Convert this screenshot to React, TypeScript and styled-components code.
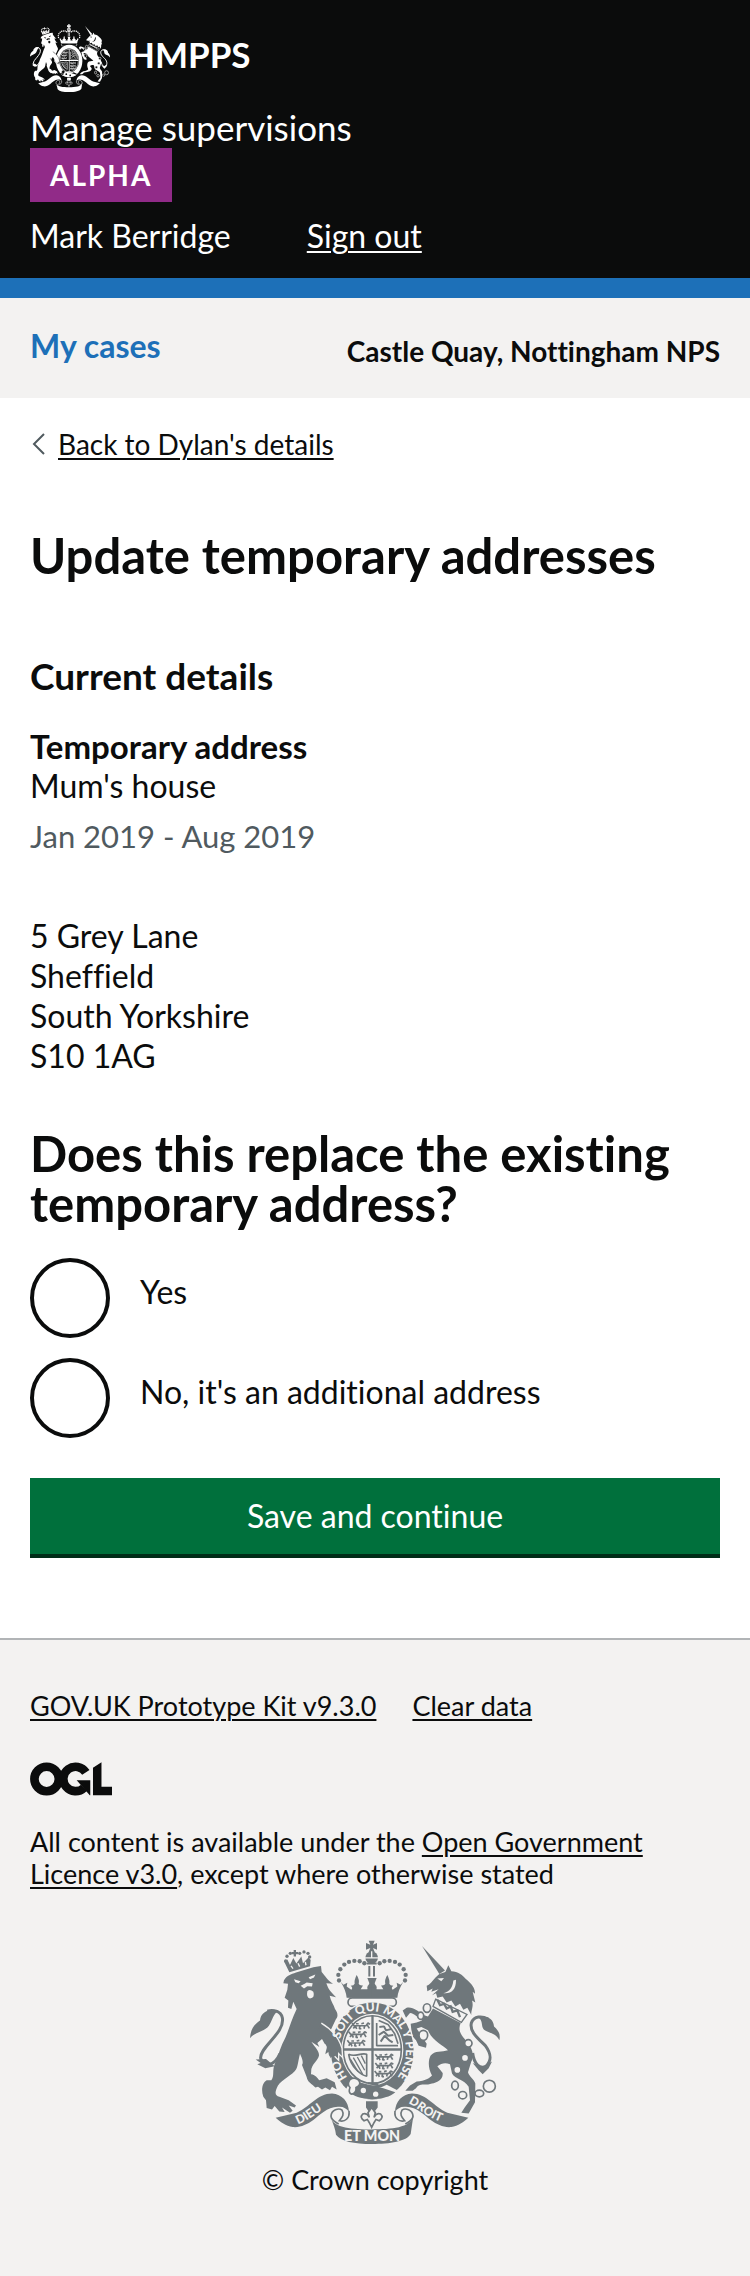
import React, { useState } from 'react';
import styled, { createGlobalStyle } from 'styled-components';

const colour = {
  ink: '#0b0c0c',
  blue: '#1d70b8',
  grey: '#f3f2f1',
  midGrey: '#b1b4b6',
  secondary: '#505a5f',
  crest: '#6f777b',
  purple: '#912b88',
  green: '#00703c',
  greenShadow: '#002d18',
};

const GlobalStyle = createGlobalStyle`
  *, *::before, *::after { box-sizing: border-box; }
  body {
    margin: 0;
    background: #fff;
    color: ${colour.ink};
    font-family: Lato, "Liberation Sans", sans-serif;
    font-size: 32px;
    line-height: 40px;
    font-variant-ligatures: none;
  }
`;

const Link = styled.a`
  color: inherit;
  text-decoration: underline;
  text-decoration-thickness: 2px;
  text-underline-offset: 3px;
`;

const Header = styled.header`
  padding: 24px 30px 22px;
  background: ${colour.ink};
  border-bottom: 20px solid ${colour.blue};
  color: #fff;
`;

const Brand = styled.a`
  display: flex;
  gap: 18px;
  color: inherit;
  text-decoration: none;
  font-size: 35px;
  font-weight: 700;
  line-height: 60px;
`;

const Service = styled.div`
  margin-top: 14px;
  font-size: 35px;
  line-height: 42px;
`;

const Tag = styled.strong`
  display: inline-block;
  vertical-align: top;
  padding: 12px 20px;
  background: ${colour.purple};
  font-size: 28px;
  line-height: 30px;
  letter-spacing: 2px;
`;

const UserRow = styled.div`
  display: flex;
  gap: 76px;
  margin-top: 14px;
`;

const Nav = styled.nav`
  display: flex;
  justify-content: space-between;
  align-items: flex-start;
  padding: 28px 30px 22px;
  background: ${colour.grey};
  font-weight: 700;
`;

const NavLink = styled.a`
  color: ${colour.blue};
  text-decoration: none;
`;

const Team = styled.span`
  font-size: 28px;
  line-height: 50px;
`;

const Main = styled.main`
  padding: 30px 30px 80px;
`;

const Back = styled.div`
  display: flex;
  align-items: center;
  gap: 12px;
  padding-left: 2px;
  font-size: 28px;
  line-height: 32px;
`;

const PageTitle = styled.h1`
  margin: 70px 0 76px;
  font-size: 49px;
  line-height: 50px;
`;

const SectionTitle = styled.h2`
  margin: 0 0 30px;
  font-size: 37px;
  line-height: 40px;
`;

const DetailName = styled.h3`
  margin: 0;
  font-size: 33px;
  line-height: 40px;
`;

const Para = styled.p`
  margin: 0;
`;

const Dates = styled.p`
  margin: 10px 0 60px;
  color: ${colour.secondary};
  font-size: 31px;
`;

const Address = styled.address`
  font-style: normal;
`;

const Question = styled.fieldset`
  display: flex;
  flex-direction: column;
  gap: 20px;
  min-width: 0;
  margin: 52px 0 40px;
  padding: 0;
  border: 0;
`;

const Legend = styled.legend`
  margin-bottom: 30px;
  padding: 0;
  font-size: 49px;
  font-weight: 700;
  line-height: 50px;
`;

const Option = styled.div`
  display: flex;
  gap: 30px;
`;

const Radio = styled.input`
  appearance: none;
  flex: none;
  width: 80px;
  height: 80px;
  margin: 0;
  border: 4px solid ${colour.ink};
  border-radius: 50%;
  background: #fff;
  &:checked {
    background: radial-gradient(circle, ${colour.ink} 20px, #fff 21px);
  }
`;

const OptionLabel = styled.label`
  padding-top: 14px;
`;

const Submit = styled.button`
  display: block;
  width: 100%;
  padding: 18px 20px;
  border: 0;
  border-bottom: 4px solid ${colour.greenShadow};
  background: ${colour.green};
  color: #fff;
  font: inherit;
  cursor: pointer;
`;

const Footer = styled.footer`
  padding: 50px 30px 80px;
  border-top: 2px solid ${colour.midGrey};
  background: ${colour.grey};
  font-size: 27px;
  line-height: 32px;
`;

const FooterLinks = styled.div`
  display: flex;
  gap: 36px;
`;

const Ogl = styled.svg`
  display: block;
  width: 82px;
  height: 34px;
  margin: 40px 0 30px;
`;

const Copyright = styled.a`
  display: flex;
  flex-direction: column;
  align-items: center;
  gap: 20px;
  margin-top: 50px;
  color: inherit;
  text-decoration: none;
`;

const CrestSvg = styled.svg<{ $w: number; $h: number }>`
  display: block;
  flex: none;
  width: ${(p) => p.$w}px;
  height: ${(p) => p.$h}px;
`;

const dots = [
  [327, 180], [325, 163], [331, 146], [343, 132], [357, 124], [373, 121], [389, 122], [403, 128],
];

const Mirror = ({ children }: { children: React.ReactNode }) => (
  <g transform="translate(852 0) scale(-1 1)">{children}</g>
);

const HalfCrown = () => (
  <g>
    {dots.map(([x, y]) => <circle key={y + x} cx={x} cy={y} r="6.5" />)}
    <path d="M332 184 L340 193 L352 187 L350 198 L364 208 Q370 202 362 196 Q372 196 374 190 Q372 178 380 163 Q389 177 386 190 Q388 196 399 195 L392 206 L412 206 L413 196 L427 190 V234 L350 232 Q348 210 332 184Z" />
    <path d="M412 172 H427 V202 H412 L418 188Z" />
  </g>
);

const Ribbon = ({ bg, fg }: { bg: string; fg: string }) => (
  <g>
    <path d="M137 593 L200 578 C240 560 262 520 306 520 C336 522 356 544 357 576 C350 564 338 558 324 560 C290 562 270 584 250 600 C230 614 212 623 188 621 C168 617 150 606 137 593Z" />
    <path d="M357 572 C360 596 344 606 328 602 C336 592 344 584 336 570 C326 562 304 570 303 588 C304 602 318 606 326 612" fill={bg} stroke={fg} strokeWidth="5" />
  </g>
);

/* Positions of the passant lions in the first and fourth quarters of the shield. */
const lions = [[366, 304], [356, 330], [352, 356], [436, 398], [436, 424], [434, 448]];

/* Royal coat of arms. bg is the surface it stands on, used for the cut-out detail. */
function Crest({ w, h, fg, bg, motto }: { w: number; h: number; fg: string; bg: string; motto?: boolean }) {
  return (
    <CrestSvg $w={w} $h={h} viewBox="60 58 750 614" preserveAspectRatio="none" fill={fg} aria-hidden="true">
      {/* cross and orb */}
      <path d="M416 60 H434 L429 72 L441 67 V87 L429 82 L434 94 H416 L421 82 L408 87 V67 L421 72Z" />
      <circle cx="425" cy="111" r="19" />
      <path d="M405 112 H445 M425 92 V112" stroke={bg} strokeWidth="4" />
      <path d="M415 136 H421 V168 H415Z M429 136 H435 V168 H429Z M410 126 H440 V132 H410Z" />
      <HalfCrown />
      <Mirror><HalfCrown /></Mirror>
      <rect x="354" y="232" width="145" height="26" rx="13" fill={bg} stroke={fg} strokeWidth="5" />

      {/* lion */}
      <path d="M178 155 L162 122 L172 117 L180 133 L190 112 L199 129 L214 108 L219 128 L236 110 L242 118 L240 137 L178 155Z" />
      <circle cx="167" cy="121" r="5" /><circle cx="171" cy="107" r="5" /><circle cx="181" cy="98" r="5" />
      <circle cx="209" cy="98" r="5" /><circle cx="222" cy="94" r="5" /><circle cx="234" cy="98" r="5" /><circle cx="239" cy="109" r="5" />
      <path d="M191 88 H198 V94 H204 V101 H198 V108 H191 V101 H185 V94 H191Z" />
      <path d="M183 136 L189 144 M204 128 L209 138 M226 124 L228 134" stroke={bg} strokeWidth="4" />
      <path d="M162 179 C172 164 182 162 198 156 L250 140 L273 136 L275 154 C286 166 290 176 309 190 L289 188 C295 206 302 214 318 230 L299 226 C302 242 312 254 315 266 C322 276 326 286 318 296 L302 330 L334 380 L335 410 L322 398 L325 416 L308 404 L306 416 C300 410 294 404 296 394 L286 402 C288 386 296 378 284 370 L276 356 L262 368 L268 380 L244 364 C256 382 268 392 267 406 C264 420 250 428 244 446 L243 462 C258 464 262 474 268 480 L290 474 L314 486 L320 508 L306 500 L300 510 L286 502 L276 508 L264 500 L256 502 C246 490 232 486 230 470 L216 434 C222 424 214 410 210 400 C204 424 204 436 198 448 C188 464 156 478 144 496 C132 520 136 526 148 530 L176 540 L198 556 L194 562 L176 556 L188 572 L180 578 L156 562 L164 576 L148 574 L134 558 L126 568 L110 564 L108 540 L100 530 C92 508 98 486 110 480 L124 480 C134 468 126 450 134 432 C146 404 152 376 166 352 C178 326 184 298 200 266 L190 244 L184 266 L174 262 L175 240 L164 232 L172 208 L174 190 L160 188Z" />
      <path d="M192 176 L212 182 L206 188 L196 185Z M236 170 L256 162 L252 171 L240 176Z M212 196 L224 190 L230 186 L248 188 L246 198 L232 197 L222 204Z M232 212 Q240 204 250 214 Q256 232 240 234 Q228 232 232 212Z" fill={bg} />
      <path d="M150 400 C134 436 102 446 92 414 C88 380 166 338 157 292 C152 270 128 268 112 272" fill="none" stroke={fg} strokeWidth="9" />
      <path d="M146 270 C116 262 92 276 90 300 C80 308 62 318 60 354 C76 332 110 334 120 310 C128 298 128 282 146 270Z M77 418 L108 416 L134 438 L106 444 L82 432 L92 428Z" />

      {/* unicorn */}
      <path d="M576 76 L645 150 L628 160Z" />
      <path d="M628 160 L646 154 L655 134 L664 152 C684 152 698 164 706 174 C726 190 736 204 735 220 L728 214 L736 246 L726 240 C732 260 722 270 724 284 L712 262 L700 268 L690 250 L676 258 L664 240 L650 246 L638 228 L622 232 L618 218 L606 224 L626 206 L604 214 L608 204 L592 212 L590 196 C606 188 608 176 628 160Z" />
      <path d="M622 174 L642 172 L634 182Z M678 178 C678 210 664 220 640 218 C660 214 668 200 670 180Z" fill={bg} />
      <path d="M617 236 L711 282 L694 306 L609 258Z" fill={bg} stroke={fg} strokeWidth="4" />
      <path d="M622 238 L630 254 L642 250 L650 264 L662 258 L668 274 L682 270 L690 290" fill="none" stroke={fg} strokeWidth="7" />
      <path d="M609 264 L692 308 C684 326 690 340 704 356 C722 376 736 400 724 424 L714 456 C718 470 732 476 736 490 L735 546 L716 580 L694 578 L704 562 L720 540 L716 500 C702 476 676 478 666 460 L660 432 C644 426 634 430 622 438 L638 458 C640 480 620 486 606 490 C586 498 570 486 558 504 L548 512 L526 512 L540 496 L560 484 C586 482 598 474 606 466 C594 444 594 420 602 406 C614 390 636 396 654 390 C640 374 608 364 594 330 L574 320 L560 324 L590 370 L588 382 L566 376 L558 360 L546 346 L542 310 L560 306 L576 300 C562 290 554 280 540 278 L528 292 L518 270 L530 262 C548 258 564 272 580 284 L594 288Z" />
      <path d="M728 398 C732 432 750 448 768 438 C788 418 782 398 766 376 C744 354 718 334 724 308 C732 286 756 286 774 296" fill="none" stroke={fg} strokeWidth="9" />
      <path d="M746 292 C770 284 790 294 792 318 C806 330 812 342 808 360 C798 338 776 338 762 328 C752 316 760 302 746 292Z M728 428 L756 440 L786 424 L776 444 L758 462 L746 450Z" />
      <g fill={bg} stroke={fg} strokeWidth="5">
        <ellipse cx="591" cy="263" rx="11" ry="13" /><ellipse cx="572" cy="286" rx="9" ry="11" />
        <ellipse cx="580" cy="345" rx="13" ry="15" /><circle cx="715" cy="369" r="11" />
        <circle cx="705" cy="413" r="11" /><circle cx="682" cy="449" r="11" />
        <ellipse cx="675" cy="496" rx="10" ry="13" /><ellipse cx="698" cy="525" rx="12" ry="11" />
        <ellipse cx="748" cy="520" rx="13" ry="10" /><circle cx="778" cy="498" r="18" fill="none" />
      </g>

      {/* garter and shield */}
      <ellipse cx="427" cy="392" rx="128" ry="150" fill={bg} />
      <ellipse cx="427" cy="392" rx="124" ry="146" />
      <ellipse cx="427" cy="388" rx="93" ry="108" fill={bg} />
      <ellipse cx="427" cy="388" rx="87" ry="102" fill="none" stroke={fg} strokeWidth="5" />
      <path d="M424 286 H431 V490 H424Z M340 384 H514 V391 H340Z" />
      <g fill="none" stroke={fg} strokeWidth="5" strokeLinejoin="bevel">
        {lions.map(([x, y]) => (
          <path key={`${x}-${y}`} transform={`translate(${x} ${y})`} d="M0 4 L6 12 H42 L48 4 L54 8 M4 20 L10 12 L14 22 M24 12 L22 21 L28 21 M38 12 L36 21 M46 10 L52 20 M12 6 H20 M28 6 L36 4" />
        ))}
        <path d="M440 308 V376 H504 M446 300 L474 312 L494 340 L504 370" />
        <path d="M448 320 L462 318 L468 330 L484 326 M446 344 L462 334 L474 346 L490 344 M452 364 L464 346 L478 360 L488 366" strokeWidth="6" />
        <path d="M356 402 C376 412 392 396 410 402 L410 468 C392 464 362 440 356 402Z" />
      </g>
      <path d="M370 412 L398 462 M382 410 L404 450 M394 406 L406 430 M362 418 L384 454" stroke={fg} strokeWidth="4" />
      {/* buckle */}
      <path d="M354 496 C380 510 430 516 470 494 L502 510 C470 546 390 546 344 514Z" fill={bg} />
      <path d="M368 480 L392 488 L460 504 L496 516 C470 540 400 546 362 520Z" />
      <path d="M414 486 H440 L450 498 L414 492Z" />
      <path d="M360 478 Q374 468 386 480 Q396 494 378 502 Q380 520 364 522 Q354 518 360 502 Q350 492 360 478Z" fill={bg} stroke={fg} strokeWidth="5" />
      <circle cx="400" cy="511" r="8" fill={bg} /><circle cx="437" cy="522" r="8" fill={bg} />
      {/* lion's paw laid over the garter */}
      <path d="M274 308 C304 326 326 350 336 384 L338 412 L326 398 L326 418 L312 402 L302 414 L288 370 L262 330Z" />
      <path d="M274 308 C304 326 326 350 336 384 L338 412 L326 400 L326 420 L314 408" fill="none" stroke={bg} strokeWidth="4" />

      {/* scroll */}
      <Ribbon bg={bg} fg={fg} />
      <Mirror><Ribbon bg={bg} fg={fg} /></Mirror>
      <path d="M302 592 C310 624 370 628 426 628 C484 628 542 624 550 588 L542 642 C530 664 480 672 426 672 C372 672 332 664 318 644 C316 626 310 612 302 592Z" />
      <path d="M408 543 H443 V562 L434 574 L425 560 L416 574 L408 562Z" />
      <path d="M425 562 L436 578 L432 592 Q440 576 452 582 Q462 592 448 602 L438 598 L432 608 L425 622 L418 608 L412 598 L402 602 Q388 592 398 582 Q410 576 418 592 L414 578Z" fill={bg} stroke={fg} strokeWidth="5" />

      {motto && (
        <g fill={bg} fontFamily="Lato, sans-serif" fontWeight="900" fontSize="36">
          <path id="garter" d="M352 471 A101 119 0 1 1 482 491" fill="none" />
          <path id="scrollLeft" d="M204 613 C236 602 256 580 300 556 L330 546" fill="none" />
          <path id="scrollRight" d="M534 550 C564 560 590 596 650 611 L680 616" fill="none" />
          <text><textPath href="#garter">HO</textPath></text>
          <text><textPath href="#garter" startOffset="120">SOIT</textPath></text>
          <text><textPath href="#garter" startOffset="210">QUI</textPath></text>
          <text><textPath href="#garter" startOffset="288">MAL Y</textPath></text>
          <text><textPath href="#garter" startOffset="404">PENSE</textPath></text>
          <text><textPath href="#scrollLeft">DIEU</textPath></text>
          <text><textPath href="#scrollRight">DROIT</textPath></text>
          <text x="426" y="664" fontSize="43" textAnchor="middle">ET MON</text>
        </g>
      )}
    </CrestSvg>
  );
}

const options = [
  { id: 'replace-yes', label: 'Yes' },
  { id: 'replace-no', label: "No, it's an additional address" },
];

export default function App() {
  const [answer, setAnswer] = useState('');
  return (
    <>
      <GlobalStyle />
      <Header>
        <Brand href="#">
          <Crest w={80} h={68} fg="#fff" bg={colour.ink} />
          HMPPS
        </Brand>
        <Service>Manage supervisions</Service>
        <Tag>ALPHA</Tag>
        <UserRow>
          <span>Mark Berridge</span>
          <Link href="#">Sign out</Link>
        </UserRow>
      </Header>
      <Nav>
        <NavLink href="#">My cases</NavLink>
        <Team>Castle Quay, Nottingham NPS</Team>
      </Nav>
      <Main>
        <Back>
          <svg width="14" height="22" viewBox="0 0 14 22" fill="none" stroke={colour.secondary} strokeWidth="2" aria-hidden="true">
            <path d="M12 1 L2 11 L12 21" />
          </svg>
          <Link href="#">Back to Dylan's details</Link>
        </Back>
        <PageTitle>Update temporary addresses</PageTitle>
        <SectionTitle>Current details</SectionTitle>
        <DetailName>Temporary address</DetailName>
        <Para>Mum's house</Para>
        <Dates>Jan 2019 - Aug 2019</Dates>
        <Address>
          5 Grey Lane<br />Sheffield<br />South Yorkshire<br />S10 1AG
        </Address>
        <form onSubmit={(e) => e.preventDefault()}>
          <Question>
            <Legend>Does this replace the existing temporary address?</Legend>
            {options.map((o) => (
              <Option key={o.id}>
                <Radio type="radio" name="replace" id={o.id} checked={answer === o.id} onChange={() => setAnswer(o.id)} />
                <OptionLabel htmlFor={o.id}>{o.label}</OptionLabel>
              </Option>
            ))}
          </Question>
          <Submit type="submit">Save and continue</Submit>
        </form>
      </Main>
      <Footer>
        <FooterLinks>
          <Link href="#">GOV.UK Prototype Kit v9.3.0</Link>
          <Link href="#">Clear data</Link>
        </FooterLinks>
        <Ogl viewBox="0 0 483 196" role="img" aria-label="Open Government Licence">
          <g fill="none" stroke={colour.ink} strokeWidth="51">
            <circle cx="98" cy="98" r="72" />
            <path d="M329 59 A72 72 0 1 0 318 150" />
          </g>
          <path d="M275 106 H355 V194 H352 L275 106Z M371 32 L421 0 V143 H483 V194 H371Z" fill={colour.ink} />
        </Ogl>
        <Para>
          All content is available under the <Link href="#">Open Government Licence v3.0</Link>, except where otherwise stated
        </Para>
        <Copyright href="#">
          <Crest w={250} h={204} fg={colour.crest} bg={colour.grey} motto />
          © Crown copyright
        </Copyright>
      </Footer>
    </>
  );
}
